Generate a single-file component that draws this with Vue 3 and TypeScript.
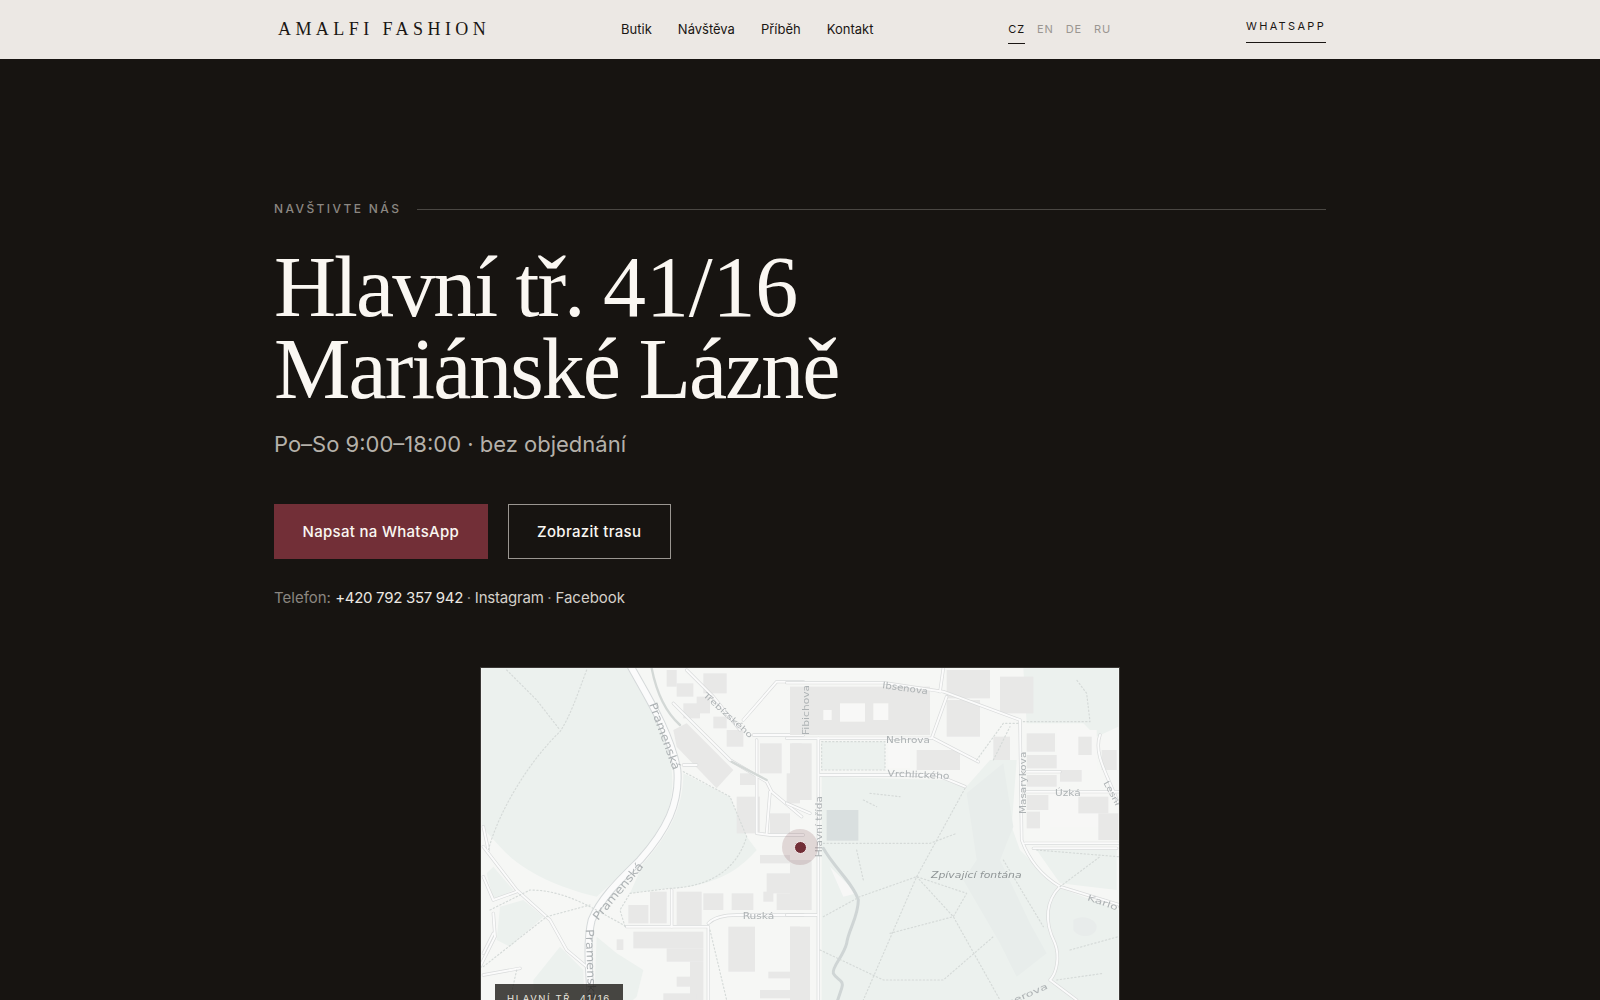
<script setup lang="ts">
const navLinks = ['Butik', 'Návštěva', 'Příběh', 'Kontakt'];
const langs = ['CZ', 'EN', 'DE', 'RU'];

// buildings traced from the map tile, as x y w h
const buildingsWest: number[][] = [
  [590, 30, 30, 50], [620, 70, 50, 40], [700, 40, 70, 60], [640, 130, 50, 45], [680, 110, 40, 50],
  [730, 170, 40, 35], [770, 210, 50, 50], [870, 250, 65, 90], [965, 250, 30, 90], [950, 340, 40, 90],
  [810, 340, 50, 35], [800, 410, 70, 110], [900, 460, 60, 60], [870, 585, 90, 25], [890, 640, 100, 60],
  [880, 695, 30, 30], [920, 700, 70, 50], [700, 700, 60, 50], [785, 700, 65, 50], [620, 695, 75, 100],
  [540, 695, 50, 95], [475, 735, 60, 55], [490, 815, 210, 50], [590, 865, 110, 40], [660, 905, 40, 115],
  [620, 950, 40, 30], [580, 1000, 100, 20], [440, 838, 20, 32], [775, 800, 80, 135], [870, 990, 120, 25],
  [895, 935, 75, 20], [960, 800, 30, 45],
];
const buildingsEast: number[][] = [
  [0, 80, 420, 145], [0, 250, 65, 170], [0, 600, 65, 150], [0, 800, 60, 220], [380, 270, 130, 60],
  [470, 120, 100, 110], [470, 30, 130, 85], [630, 50, 100, 110], [710, 220, 85, 55], [710, 285, 90, 40],
  [710, 345, 90, 35], [710, 405, 65, 45], [865, 230, 40, 55], [935, 270, 45, 60], [810, 330, 65, 35],
  [865, 410, 90, 50], [710, 455, 40, 50], [925, 460, 60, 80], [610, 230, 50, 70],
];
const lightPatches: number[][] = [
  [150, 130, 75, 55], [250, 130, 45, 50], [100, 150, 25, 30], [295, 245, 65, 80],
];

const roadsWest = [
  'M610 130 L780 300 L890 365 L905 395 L995 470',
  'M40 560 L140 690 L240 780 L290 870 L350 920',
  'M860 240 L860 520 L900 525 L1000 525',
  'M820 180 L920 65 L1000 65',
  'M850 225 L1000 225',
  'M470 800 L715 800 L715 1030',
  'M715 790 C730 775 760 765 800 765 L1000 765',
  'M650 30 L730 110 L810 210',
  'M900 395 L890 520',
  'M40 650 L70 720 L140 695',
  'M40 945 L150 925',
  'M70 820 L40 880',
  'M605 690 L605 800',
  'M40 500 L55 570',
  'M70 760 L75 830 L30 920',
  'M640 315 L680 315',
];
const roadsEast = [
  'M-10 68 L280 68 L460 95 L690 180 L695 540 C720 610 760 650 810 680 L990 735',
  'M-10 235 L425 235 L470 110',
  'M430 235 L565 305',
  'M85 235 V1030',
  'M90 345 H440 L525 380',
  'M705 335 H810 M705 395 H985 M705 550 H985',
  'M730 565 H980 M810 680 C770 720 760 780 795 850 C810 890 800 940 780 960 L860 1020',
  'M930 225 C910 280 950 340 985 430',
  'M-10 765 H80',
  'M460 25 L450 95',
  'M-10 430 L60 460',
];
</script>

<template>
  <div class="page">
    <header class="topbar">
      <div class="topbar-inner">
        <a class="logo">AMALFI FASHION</a>
        <nav class="nav">
          <a v-for="link in navLinks" :key="link">{{ link }}</a>
        </nav>
        <div class="langs">
          <span v-for="(lang, i) in langs" :key="lang" class="lang" :class="{ active: i === 0 }">{{ lang }}</span>
        </div>
        <a class="wa-link">WHATSAPP</a>
      </div>
    </header>

    <main class="visit">
      <div class="eyebrow">
        <span>NAVŠTIVTE NÁS</span>
        <i class="eyebrow-line"></i>
      </div>
      <h1 class="title">Hlavní tř. <span class="num">41/16</span><br />Mariánské Lázně</h1>
      <p class="hours">Po–So 9:00–18:00 · bez objednání</p>
      <div class="actions">
        <a class="btn btn-primary">Napsat na WhatsApp</a>
        <a class="btn btn-ghost">Zobrazit trasu</a>
      </div>
      <p class="contacts">
        <span class="muted">Telefon: </span><a class="phone">+420 792 357 942</a>
        <span class="muted sep"> · </span><a class="insta">Instagram</a>
        <span class="muted sep"> · </span><a>Facebook</a>
      </p>

      <div class="map">
        <svg class="map-svg" viewBox="0 0 638 358" width="638" height="358">
          <rect width="638" height="358" fill="#f6f7f5" />

          <!-- west half of the tile -->
          <g transform="translate(-11 -8) scale(.33333)">
            <path fill="#ecf1ee" d="M35 25 L480 25 C520 100 590 200 605 330 C615 420 590 500 500 600 L380 710 C300 690 170 650 90 560 L35 500 Z" />
            <path fill="#ecf1ee" d="M640 340 L780 410 L830 530 L860 570 C800 640 720 680 600 685 L480 700 L520 610 C600 520 640 440 640 340 Z" />
            <path fill="#ecf1ee" d="M190 960 L270 860 L340 930 L345 1080 L190 1080 Z M90 740 L160 720 L220 770 L120 860 L80 840 Z M50 640 L70 620 L130 690 L70 720 Z" />
            <path fill="#ecf1ee" d="M380 830 L440 880 L520 930 L500 1010 L420 1080 L370 1080 Z" />
            <rect v-for="(b, i) in buildingsWest" :key="'bw' + i" :x="b[0]" :y="b[1]" :width="b[2]" :height="b[3]" fill="#e8e8e7" />
            <path fill="#e8e8e7" d="M610 210 L650 190 L790 330 L740 385 L620 260 Z" />

            <g fill="none" stroke-linecap="round" stroke-linejoin="round">
              <path stroke="#d5d9da" stroke-width="24" d="M480 15 C520 90 600 210 622 330 C630 430 590 510 510 600 C450 660 395 710 365 780 C350 840 355 920 365 1040" />
              <path v-for="(d, i) in roadsWest" :key="'cw' + i" :d="d" stroke="#d9dbdb" stroke-width="10" />
              <path stroke="#fbfbfb" stroke-width="18" d="M480 15 C520 90 600 210 622 330 C630 430 590 510 510 600 C450 660 395 710 365 780 C350 840 355 920 365 1040" />
              <path v-for="(d, i) in roadsWest" :key="'rw' + i" :d="d" stroke="#fbfbfb" stroke-width="6" />
              <path stroke="#d3d8d6" stroke-width="7" d="M545 25 C560 100 590 160 630 195 M785 305 L890 360" />
              <g stroke="#d5dad8" stroke-width="3.5" stroke-dasharray="4 7">
                <path d="M350 30 C320 110 300 170 270 215 C190 290 90 440 55 570" />
                <path d="M110 30 L200 120 L270 210" />
                <path d="M640 335 L780 410 L830 530 C800 630 720 680 600 685 L480 700 L450 750 L465 800" />
                <path d="M60 750 L180 690 C250 690 310 715 360 740 L470 800" />
                <path d="M40 920 L230 770 L360 735" />
                <path d="M140 930 L120 1020 M720 810 L770 1020" />
              </g>
            </g>

            <g class="map-label">
              <text transform="translate(537 133) rotate(70)" font-size="34" textLength="212" lengthAdjust="spacingAndGlyphs">Pramenská</text>
              <text transform="translate(698 108) rotate(42)" font-size="24" textLength="190" lengthAdjust="spacingAndGlyphs">Třebízského</text>
              <text transform="translate(384 783) rotate(-50)" font-size="34" textLength="214" lengthAdjust="spacingAndGlyphs">Pramenská</text>
              <text transform="translate(347 808) rotate(88)" font-size="34" textLength="212" lengthAdjust="spacingAndGlyphs">Pramenská</text>
              <text x="818" y="777" font-size="28" textLength="95" lengthAdjust="spacingAndGlyphs">Ruská</text>
            </g>
          </g>

          <!-- east half of the tile -->
          <g transform="translate(309 -8) scale(.33333)">
            <path fill="#ecf1ee" d="M95 350 L470 360 L525 385 L600 300 L680 300 L665 500 L690 570 L800 680 L985 750 L985 1020 L95 1020 Z" />
            <path fill="#ecf1ee" d="M700 25 L985 25 L985 200 L920 230 L880 190 L710 190 Z M95 245 H285 V330 H95 Z M740 570 H980 V690 L810 670 Z" />
            <path fill="#e8edeb" d="M530 400 L640 310 L670 500 L630 600 L720 790 L770 880 L680 950 L630 850 L520 660 L560 600 Z" />
            <path fill="#e8eceb" d="M850 780 C880 760 920 780 920 800 C920 830 870 840 850 810 Z" />
            <path fill="#f7f7f6" d="M800 210 H920 V330 H800 Z M780 400 H930 V500 H780 Z M120 620 L200 700 L160 710 Z" />
            <rect v-for="(b, i) in buildingsEast" :key="'be' + i" :x="b[0]" :y="b[1]" :width="b[2]" :height="b[3]" fill="#e8e8e7" />
            <rect v-for="(p, i) in lightPatches" :key="'lp' + i" :x="p[0]" :y="p[1]" :width="p[2]" :height="p[3]" fill="#f8f8f7" />
            <rect x="110" y="450" width="95" height="92" fill="#d9dfdf" />
            <path fill="none" stroke="#cfd5d5" stroke-width="9" stroke-linejoin="round" stroke-linecap="round" d="M100 565 C130 620 190 670 205 720 C205 770 175 810 170 850 C160 890 125 920 130 940 C140 960 165 960 155 985 L140 1030" />

            <g fill="none" stroke-linecap="round" stroke-linejoin="round">
              <path v-for="(d, i) in roadsEast" :key="'ce' + i" :d="d" stroke="#d9dbdb" stroke-width="10" />
              <path v-for="(d, i) in roadsEast" :key="'re' + i" :d="d" stroke="#fbfbfb" stroke-width="6" />
              <g stroke="#d5dad8" stroke-width="3.5" stroke-dasharray="4 7">
                <path d="M95 245 H285 V330 H95 Z" />
                <path d="M525 385 L380 650 L220 1020" />
                <path d="M380 650 L490 770 L630 1020" />
                <path d="M100 770 L210 710 L380 650 L530 700 L490 770 L300 820" />
                <path d="M100 550 H420 L500 520 M200 570 L220 660" />
                <path d="M90 870 L280 960 L460 960 L610 830" />
                <path d="M700 185 H900 L890 100 L860 60 M560 300 L640 190 H690 M610 300 L660 200" />
                <path d="M740 570 L985 590 M640 600 L760 800 M810 680 L930 590 M840 870 L985 830 M800 960 L940 940" />
                <path d="M240 400 L330 410 M220 420 L260 440" />
              </g>
            </g>

            <g class="map-label">
              <text transform="translate(276 84) rotate(8)" font-size="27" textLength="138" lengthAdjust="spacingAndGlyphs">Ibsenova</text>
              <text transform="translate(58 225) rotate(-90)" font-size="26" textLength="150" lengthAdjust="spacingAndGlyphs">Fibichova</text>
              <text x="288" y="249" font-size="28" textLength="132" lengthAdjust="spacingAndGlyphs">Nehrova</text>
              <text transform="translate(292 349) rotate(2.5)" font-size="27" textLength="186" lengthAdjust="spacingAndGlyphs">Vrchlického</text>
              <text transform="translate(707 462) rotate(-90)" font-size="25" textLength="187" lengthAdjust="spacingAndGlyphs">Masarykova</text>
              <text x="795" y="408" font-size="26" textLength="77" lengthAdjust="spacingAndGlyphs">Úzká</text>
              <text transform="translate(940 368) rotate(62)" font-size="25" textLength="80" lengthAdjust="spacingAndGlyphs">Lesní</text>
              <text transform="translate(97 592) rotate(-90)" font-size="26" textLength="184" lengthAdjust="spacingAndGlyphs">Hlavní třída</text>
              <text x="423" y="653" class="poi" font-size="28" textLength="272" lengthAdjust="spacingAndGlyphs">Zpívající fontána</text>
              <text transform="translate(890 720) rotate(19)" font-size="25" textLength="220" lengthAdjust="spacingAndGlyphs">Karlovarská</text>
              <text transform="translate(483 1115) rotate(-24)" font-size="25" textLength="320" lengthAdjust="spacingAndGlyphs">Reitenbergerova</text>
            </g>
          </g>
        </svg>
        <span class="pin-halo"><i class="pin-dot"></i></span>
        <span class="map-chip">HLAVNÍ TŘ. 41/16</span>
      </div>
    </main>
  </div>
</template>

<style>
html,
body {
  background: #171411;
}
</style>

<style scoped>
.page {
  font-family: Inter, "Noto Sans", sans-serif;
  background: #171411;
  color: #faf7f2;
  min-height: 1000px;
}
.topbar {
  background: #ece8e4;
  height: 59px;
  color: #1a1613;
}
.topbar-inner {
  width: 1052px;
  height: 58px;
  margin: 0 auto;
  display: flex;
  align-items: center;
  justify-content: space-between;
}
.logo {
  font-family: "Liberation Serif", serif;
  font-size: 18px;
  letter-spacing: 0.246em;
  margin-left: 4px;
  margin-right: -4px;
  white-space: nowrap;
}
.nav {
  display: flex;
  gap: 26px;
  font-size: 13px;
}
.langs {
  display: flex;
  gap: 12px;
  font-size: 11px;
  letter-spacing: 0.08em;
  color: #9a9691;
  align-self: stretch;
  align-items: center;
}
.lang {
  position: relative;
}
.lang.active {
  color: #1a1613;
}
.lang.active::after {
  content: "";
  position: absolute;
  left: 0;
  right: 0;
  bottom: -8px;
  height: 1px;
  background: #1a1613;
}
.wa-link {
  font-size: 11px;
  letter-spacing: 0.21em;
  border-bottom: 1px solid #1a1613;
  padding-bottom: 9px;
  margin-top: 4px;
}
.visit {
  width: 1052px;
  margin: 0 auto;
  padding: 141px 0 80px;
}
.eyebrow {
  display: flex;
  align-items: center;
  gap: 16px;
  font-size: 12px;
  font-weight: 500;
  letter-spacing: 0.2em;
  color: #8b8782;
  line-height: 18px;
}
.eyebrow-line {
  flex: 1;
  height: 1px;
  background: #4a4743;
}
.title {
  margin: 28px 0 0;
  font-family: "Liberation Serif", serif;
  font-weight: 400;
  font-size: 86px;
  line-height: 82px;
  letter-spacing: -2px;
  color: #faf7f2;
}
.num {
  letter-spacing: -0.2px;
}
.hours {
  margin: 18px 0 0;
  font-size: 22px;
  line-height: 32px;
  color: #b5b1aa;
}
.actions {
  display: flex;
  gap: 20px;
  margin-top: 44px;
}
.btn {
  height: 55px;
  display: flex;
  align-items: center;
  box-sizing: border-box;
  font-size: 15px;
  font-weight: 500;
  letter-spacing: 0.02em;
  color: #faf7f2;
}
.btn-primary {
  background: #722f37;
  padding: 0 28.5px;
}
.btn-ghost {
  border: 1px solid #9a9691;
  padding: 0 28.5px;
}
.contacts {
  margin: 28px 0 0;
  font-size: 15px;
  line-height: 22px;
  color: #d4d0ca;
  white-space: pre-wrap;
}
.muted {
  color: #8a8680;
}
.sep {
  word-spacing: -0.5px;
}
.phone {
  color: #ece8e2;
  letter-spacing: -0.3px;
}
.insta {
  letter-spacing: -0.2px;
}
.map {
  position: relative;
  width: 640px;
  height: 360px;
  margin: 58px auto 0;
  border: 1px solid #3a3835;
  box-sizing: border-box;
  overflow: hidden;
}
.map-svg {
  display: block;
  filter: blur(0.4px);
}
.map-label text {
  font-family: "DejaVu Sans", "Open Sans", sans-serif;
  fill: #adb2b4;
}
.map-label text.poi {
  font-style: italic;
  fill: #8f9596;
}
.pin-halo {
  position: absolute;
  left: 50%;
  top: 50%;
  width: 36px;
  height: 36px;
  margin: -18px 0 0 -18px;
  border-radius: 50%;
  background: rgba(114, 47, 55, 0.16);
  display: flex;
  align-items: center;
  justify-content: center;
}
.pin-dot {
  width: 11px;
  height: 11px;
  border-radius: 50%;
  background: #722f37;
  border: 1px solid #f5ecec;
  box-sizing: content-box;
}
.map-chip {
  position: absolute;
  left: 14px;
  bottom: 14px;
  height: 28px;
  box-sizing: border-box;
  padding: 0 12px;
  display: flex;
  align-items: center;
  background: rgba(23, 20, 17, 0.78);
  color: #e9e5df;
  font-size: 9.5px;
  letter-spacing: 0.17em;
  white-space: nowrap;
}
</style>
